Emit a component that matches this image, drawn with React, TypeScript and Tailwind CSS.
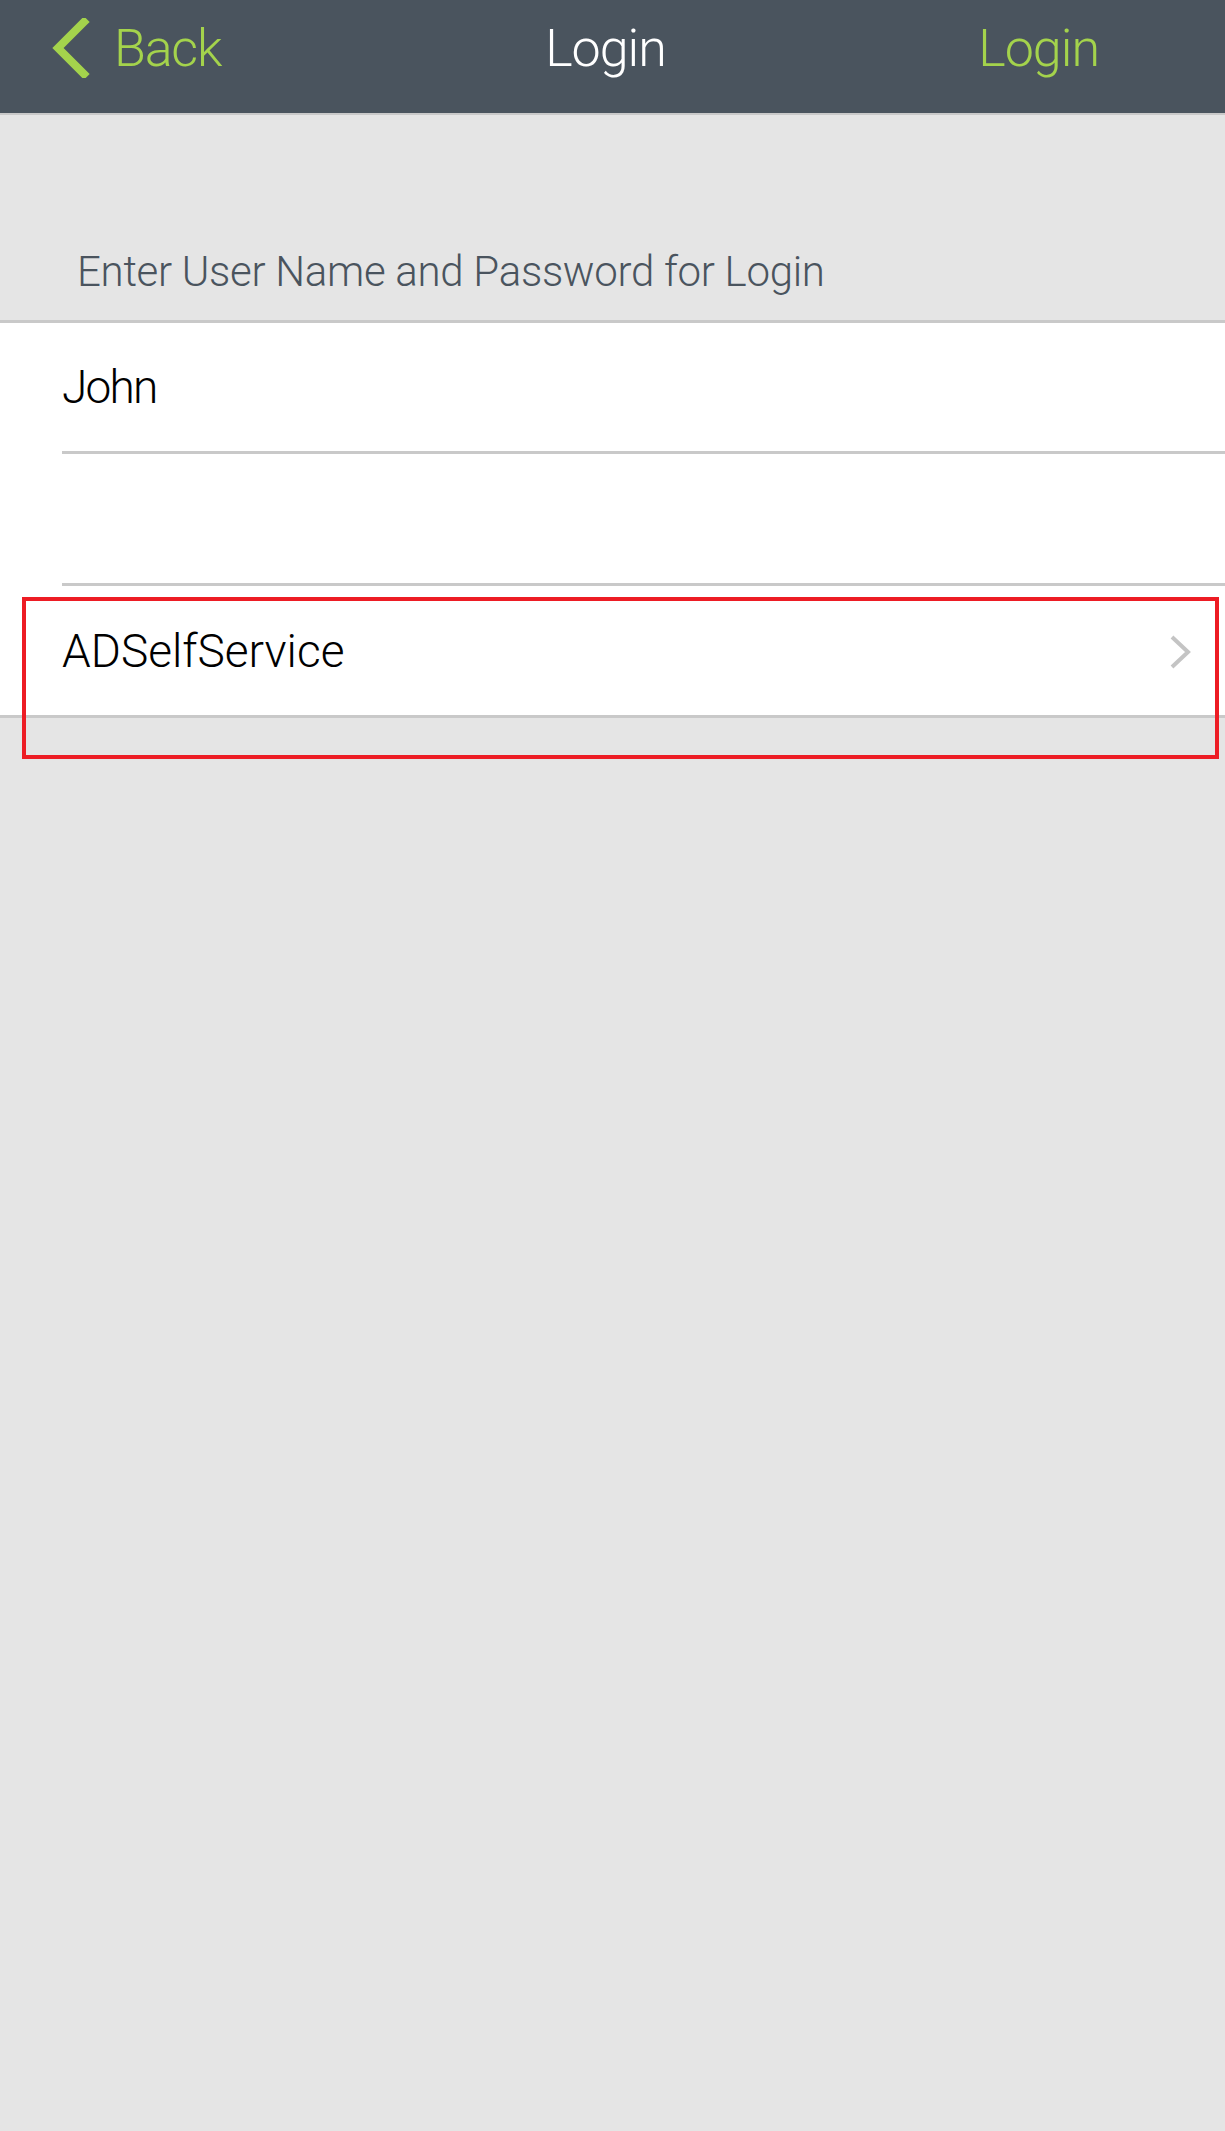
import React from "react";

const font = { fontFamily: "Roboto, 'Open Sans', sans-serif" };

export default function App() {
  return (
    <div className="min-h-[2131px] w-[1225px] bg-[#e5e5e5]" style={font}>
      <header className="relative flex h-[115px] items-center border-b-2 border-[#c9c9c9] bg-[#4a545e] pb-[16px]">
        <div className="flex w-[400px] items-center pl-[50px]">
          <svg width="40" height="60" viewBox="0 0 40 60" className="mr-[24px] mb-[2px]">
            <path d="M34 4 L8 30 L34 56" fill="none" stroke="#a4d34c" strokeWidth="8" strokeLinecap="square" />
          </svg>
          <span className="text-[52px] font-light leading-none tracking-[-1.2px] text-[#a4d34c]">Back</span>
        </div>
        <div className="flex-1 pr-[14px] text-center text-[52px] font-light leading-none tracking-[-1px] text-white">Login</div>
        <div className="flex w-[400px] justify-end pr-[126px] text-[52px] font-light leading-none tracking-[-1px] text-[#a4d34c]">Login</div>
      </header>
      <div className="flex h-[205px] items-end pb-[27px] pl-[77px]">
        <span className="text-[42px] font-light leading-none tracking-[-0.3px] text-[#4a545e]">
          Enter User Name and Password for Login
        </span>
      </div>
      <div className="border-t-[3px] border-[#c9c9c9] bg-white">
        <div className="pl-[62px]">
          <div className="flex h-[131px] items-center border-b-[3px] border-[#c9c9c9]">
            <span className="text-[46px] font-light leading-none tracking-[-1.8px] text-black">John</span>
          </div>
          <div className="h-[132px] border-b-[3px] border-[#c9c9c9]" />
        </div>
        <div className="relative border-b-[3px] border-[#c9c9c9]">
          <div className="flex h-[129px] items-center justify-between pl-[62px] pr-[31px]">
            <span className="text-[46px] font-light leading-none tracking-[0px] text-black">ADSelfService</span>
            <svg width="28" height="36" viewBox="0 0 28 36" className="mt-[2px]">
              <path d="M6 3 L22 18 L6 33" fill="none" stroke="#c4c4c4" strokeWidth="4" />
            </svg>
          </div>
          <div className="pointer-events-none absolute left-[22px] top-[11px] h-[162px] w-[1197px] border-[4px] border-[#ed1c24]" />
        </div>
      </div>
    </div>
  );
}
